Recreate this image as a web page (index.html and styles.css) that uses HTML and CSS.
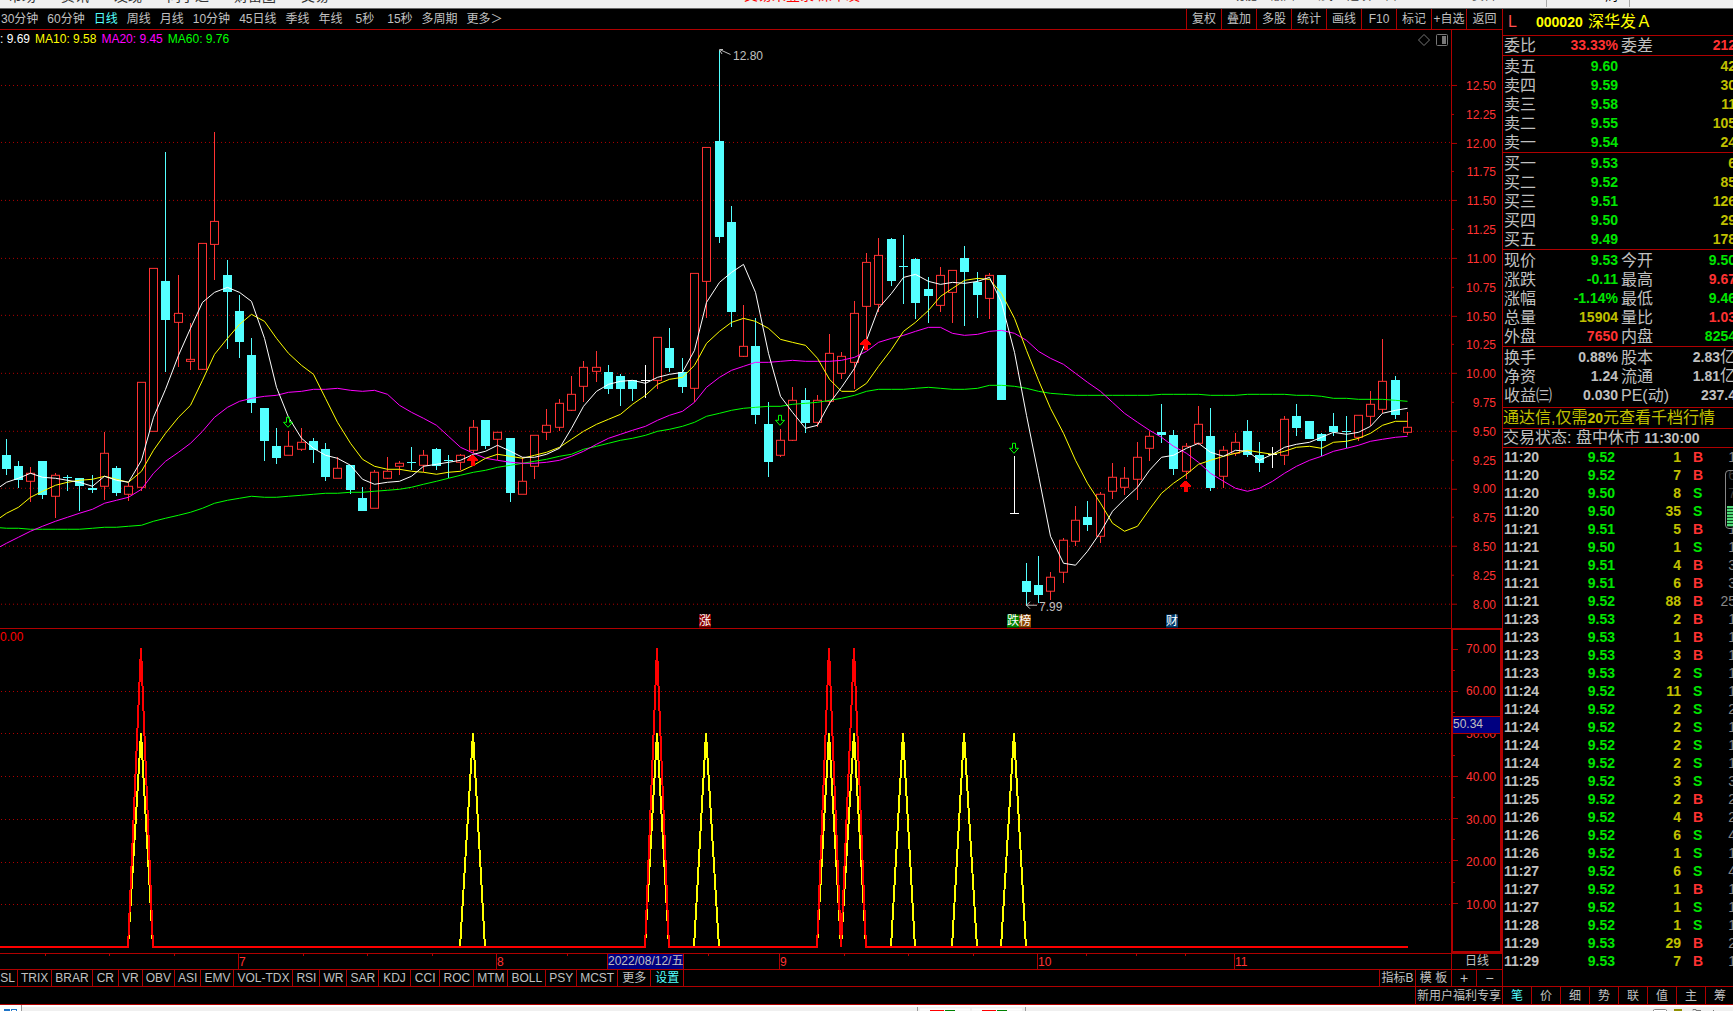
FILE: index.html
```html
<!DOCTYPE html>
<html lang="zh-CN">
<head>
<meta charset="utf-8">
<title>深华发Ａ 000020 日线</title>
<link rel="stylesheet" href="styles.css">
</head>
<body>
<div class="app">
  <header class="menubar">
    <nav class="menubar-inner" aria-label="主菜单">
      <a href="#">市场</a><a href="#">资讯</a><a href="#">发现</a><a href="#">问小达</a><a href="#">财富圈</a><a href="#">交易</a>
      <span class="login">交易未登录 深华发Ａ</span>
      <span class="menu-right">
        <a href="#">功能</a><a href="#">版面</a><a href="#">公式</a><a href="#">选项</a><a href="#">口</a>
      </span>
      <span class="account">资告</span>
      <span class="clock">12:07:05 周</span>
      <span class="window-keys"><span>▾</span><span>■</span><span>×</span></span>
    </nav>
  </header>

  <div class="workspace">
    <main class="charts">
      <div class="toolbar">
        <div class="periods">
          <button>30分钟</button><button>60分钟</button><button class="on">日线</button><button>周线</button><button>月线</button><button>10分钟</button><button>45日线</button><button>季线</button><button>年线</button><button class="short">5秒</button><button>15秒</button><button>多周期</button><button>更多＞</button>
        </div>
        <div class="tools">
          <button>复权</button><button>叠加</button><button>多股</button><button>统计</button><button>画线</button><button>F10</button><button>标记</button><button>+自选</button><button class="last">返回</button>
        </div>
      </div>

      <section class="pane price-pane">
        <div class="plot">
          <svg id="price-plot" class="layer" viewBox="0 30 1451 598" preserveAspectRatio="none"></svg>
          <div id="price-marks" class="marks"></div>
          <div class="legend">
            <span class="ma5">: 9.69</span><span class="ma10">MA10: 9.58</span><span class="ma20">MA20: 9.45</span><span class="ma60">MA60: 9.76</span>
            <svg class="plot-keys" viewBox="0 0 32 14" width="32" height="14">
              <path d="M7 1.500L12.500 7L7 12.500L1.500 7Z" fill="none" stroke="#777"/>
              <rect x="19.500" y="1.500" width="11" height="11" rx="1" fill="none" stroke="#777"/>
              <rect x="25" y="3" width="4" height="8" fill="#777"/>
            </svg>
          </div>
        </div>
        <div class="axis">
          <svg id="price-ticks" class="layer" viewBox="0 30 50 598" preserveAspectRatio="none"></svg>
          <div class="axis-labels"><span>12.50</span><span>12.25</span><span>12.00</span><span>11.75</span><span>11.50</span><span>11.25</span><span>11.00</span><span>10.75</span><span>10.50</span><span>10.25</span><span>10.00</span><span>9.75</span><span>9.50</span><span>9.25</span><span>9.00</span><span>8.75</span><span>8.50</span><span>8.25</span><span>8.00</span></div>
        </div>
      </section>

      <section class="pane signal-pane">
        <div class="plot">
          <svg id="signal-plot" class="layer" viewBox="0 629 1451 324" preserveAspectRatio="none"></svg>
          <div class="legend"><span class="signal">0.00</span></div>
        </div>
        <div class="axis boxed">
          <svg id="signal-ticks" class="layer" viewBox="0 629 50 324" preserveAspectRatio="none"></svg>
          <div class="axis-labels"><span>70.00</span><span>60.00</span><span>50.00</span><span>40.00</span><span>30.00</span><span>20.00</span><span>10.00</span></div>
          <output class="cursor-value">50.34</output>
        </div>
      </section>

      <div class="timeline">
        <div id="months" class="months"></div>
        <div class="period-name">日线</div>
      </div>

      <div class="indicators">
        <div class="indicator-tabs">
          <button class="cut">SL</button><button>TRIX</button><button>BRAR</button><button class="roomy">CR</button><button>VR</button><button>OBV</button><button>ASI</button><button>EMV</button><button>VOL-TDX</button><button>RSI</button><button>WR</button><button>SAR</button><button class="roomy">KDJ</button><button class="roomy">CCI</button><button>ROC</button><button>MTM</button><button>BOLL</button><button>PSY</button><button>MCST</button><button class="roomy">更多</button><button class="on roomy">设置</button>
        </div>
        <div class="indicator-tools">
          <button class="wide">指标B</button><button class="wide">模 板</button><button class="plus">+</button><button class="minus">−</button>
        </div>
      </div>
      <div class="promo"><a href="#">新用户福利专享</a></div>
    </main>

    <aside class="quote">
      <h1 class="stock"><span class="flag">L</span><span class="code">000020</span><span class="name">深华发Ａ</span></h1>
      <table class="rows slim"><tr><th>委比</th><td class="up">33.33%</td><th class="second">委差</th><td class="up">212</td></tr></table>
      <table class="rows book">
        <tr><th>卖五</th><td class="down">9.60</td><td class="vol">42</td></tr>
        <tr><th>卖四</th><td class="down">9.59</td><td class="vol">30</td></tr>
        <tr><th>卖三</th><td class="down">9.58</td><td class="vol">11</td></tr>
        <tr><th>卖二</th><td class="down">9.55</td><td class="vol">105</td></tr>
        <tr><th>卖一</th><td class="down">9.54</td><td class="vol">24</td></tr>
      </table>
      <table class="rows book">
        <tr><th>买一</th><td class="down">9.53</td><td class="vol">6</td></tr>
        <tr><th>买二</th><td class="down">9.52</td><td class="vol">85</td></tr>
        <tr><th>买三</th><td class="down">9.51</td><td class="vol">126</td></tr>
        <tr><th>买四</th><td class="down">9.50</td><td class="vol">29</td></tr>
        <tr><th>买五</th><td class="down">9.49</td><td class="vol">178</td></tr>
      </table>
      <table class="rows">
        <tr><th>现价</th><td class="down">9.53</td><th class="second">今开</th><td class="down">9.50</td></tr>
        <tr><th>涨跌</th><td class="down">-0.11</td><th class="second">最高</th><td class="up">9.67</td></tr>
        <tr><th>涨幅</th><td class="down">-1.14%</td><th class="second">最低</th><td class="down">9.46</td></tr>
        <tr><th>总量</th><td class="vol">15904</td><th class="second">量比</th><td class="up">1.03</td></tr>
        <tr><th>外盘</th><td class="up">7650</td><th class="second">内盘</th><td class="down">8254</td></tr>
      </table>
      <table class="rows basics">
        <tr><th>换手</th><td>0.88%</td><th class="second">股本</th><td>2.83<span class="unit">亿</span></td></tr>
        <tr><th>净资</th><td>1.24</td><th class="second">流通</th><td>1.81<span class="unit">亿</span></td></tr>
        <tr><th>收益㈢</th><td>0.030</td><th class="second">PE(动)</th><td>237.4</td></tr>
      </table>
      <a class="notice" href="#">通达信,仅需<b>20</b>元查看千档行情</a>
      <p class="status">交易状态: 盘中休市 <b>11:30:00</b></p>
      <div class="ticks">
        <table class="rows"><tbody id="tick-rows"></tbody></table>
        <div class="level" aria-hidden="true"><span></span></div>
      </div>
      <div class="quote-tabs">
        <button class="on">笔</button><button>价</button><button>细</button><button>势</button><button>联</button><button>值</button><button>主</button><button>筹</button>
      </div>
    </aside>
  </div>

  <footer class="statusbar">
    <svg class="start" viewBox="0 0 22 6" width="22" height="6"><rect width="22" height="6" fill="#fff"/><path d="M4 4h6v2h-6zM11 4h6v2h-1v-1h-4v1h-1z" fill="#1e74c8"/><path d="M21.500 0v6" stroke="#999"/></svg>
    <svg class="meters" viewBox="0 0 110 6" width="110" height="6">
      <path d="M.5 2v4M108.500 2v4" stroke="#999"/>
      <path d="M3 4.500h50M55 4.500h50" stroke="#fff" stroke-width="2"/>
      <path d="M13 5.500h14M65 5.500h14" stroke="#f00"/><path d="M28 5.500h10M80 5.500h10" stroke="#008000"/>
    </svg>
    <svg class="tray" viewBox="0 0 80 6" width="80" height="6"><path d="M.5 6V5l1-.5h11l1 .5v1" fill="#fff" stroke="#888"/><path d="M21 5h8" stroke="#909000" stroke-width="2"/><path d="M40 5.500V4.500h3v1h5" fill="none" stroke="#777"/><path d="M60 5.500h1" stroke="#777"/></svg>
  </footer>
</div>
<script src="chart.js"></script>
</body>
</html>
```
FILE: styles.css
```css
:root {
  --line: #b00000;
  --red: #ff3232;
  --green: #00e600;
  --cyan: #54ffff;
  --yellow: #c0c000;
  --grey: #c0c0c0;
}
* { box-sizing: border-box; }
body {
  margin: 0;
  background: #000;
  color: var(--grey);
  font: 12px/14px "Liberation Sans", "Noto Sans CJK SC", sans-serif;
}
button {
  margin: 0;
  padding: 0;
  border: 0;
  background: none;
  color: inherit;
  font: inherit;
  white-space: nowrap;
}
a { color: inherit; text-decoration: none; }

.app { display: flex; flex-direction: column; min-height: 100vh; overflow: hidden; }

/* menu bar */
.menubar {
  flex: none;
  height: 9px;
  overflow: hidden;
  background: #f0f0f0;
  border-bottom: 1px solid #696969;
}
.menubar-inner {
  display: flex;
  gap: 25px;
  height: 18px;
  margin-top: -11px;
  padding-left: 8px;
  color: #333;
  font-size: 14px;
  line-height: 14px;
}
.login { flex: 1; padding-left: 56px; text-align: center; color: #f00; line-height: 12px; }
.menu-right { display: flex; gap: 14px; font-size: 12px; }
.account { width: 124px; text-align: center; font-size: 12px; color: #555; }
.clock {
  width: 84px;
  margin-left: -25px;
  padding-left: 4px;
  border: solid #aaa;
  border-width: 0 1px;
  font-size: 13px;
  color: #000;
}
.window-keys { display: flex; gap: 36px; width: 78px; height: 14px; overflow: hidden; font-size: 12px; }

.workspace {
  flex: 1;
  display: grid;
  grid-template-columns: minmax(0, 1fr) 231px;
}
.on { color: var(--cyan); }

/* period and tool buttons */
.charts { display: flex; flex-direction: column; min-width: 0; }
.toolbar {
  flex: none;
  display: flex;
  justify-content: space-between;
  height: 21px;
  border-bottom: 1px solid var(--line);
}
.periods { display: flex; gap: 9px; padding-left: 1px; }
.periods .short { padding: 0 4px; }
.tools { display: flex; }
.tools button { width: 35px; border-left: 1px solid var(--line); }
.tools .last { width: 36px; }

/* chart panes */
.pane { display: flex; min-height: 0; }
.price-pane { flex: 599 1 0; border-bottom: 1px solid var(--line); }
.signal-pane { flex: 325 1 0; border-bottom: 1px solid var(--line); }
.plot { position: relative; flex: 1; min-width: 0; }
.axis {
  position: relative;
  flex: none;
  width: 51px;
  border-left: 1px solid var(--line);
  color: var(--red);
}
.layer { position: absolute; inset: 0; width: 100%; height: 100%; shape-rendering: crispEdges; }
.marks { position: absolute; inset: 0; }
.legend { position: relative; display: flex; gap: 5px; padding-top: 2px; }
.signal-pane .legend { padding-top: 1px; }
.ma5 { color: #fff; }
.ma10 { color: #ff0; }
.ma20 { color: #f0f; }
.ma60 { color: #0f0; }
.signal { color: #f00; }
.plot-keys { margin: 1px 2px 0 auto; }
.axis-labels {
  display: flex;
  flex-direction: column;
  justify-content: space-between;
  height: 100%;
  padding: 49px 6px 16px 0;
  text-align: right;
}
.boxed { border: 2px solid var(--line); border-top-width: 1px; }
.boxed .axis-labels { padding: 12px 4px 39px 0; }
.cursor-value {
  position: absolute;
  left: 0;
  right: 0;
  top: 27%;
  height: 18px;
  border: solid var(--line);
  border-width: 1px 0;
  background: #000080;
  color: var(--grey);
}
.mark { position: absolute; white-space: nowrap; transform: translateY(-50%); }
.badge { color: #fff; line-height: 13px; height: 13px; }
.badge-up { background: #8b0000; }
.badge-down { background: #008000; }
.badge-list { background: #8b4500; }
.badge-fin { background: #003c70; }

/* months */
.timeline { flex: none; display: flex; height: 16px; border-bottom: 1px solid var(--line); }
.months { position: relative; flex: 1; color: var(--red); }
.month, .minor, .cursor-date { position: absolute; top: 0; }
.month { height: 15px; border-left: 1px solid var(--line); line-height: 16px; }
.minor { width: 1px; height: 2px; background: var(--line); }
.cursor-date {
  height: 15px;
  border: solid var(--line);
  border-width: 0 1px;
  background: #000080;
  color: var(--grey);
}
.period-name { width: 51px; border-left: 1px solid var(--line); text-align: center; }

/* indicator tabs */
.indicators {
  flex: none;
  display: flex;
  justify-content: space-between;
  height: 17px;
  border-bottom: 1px solid var(--line);
}
.indicator-tabs, .indicator-tools { display: flex; }
.indicator-tabs button { padding: 0 3px; border-right: 1px solid var(--line); line-height: 16px; }
.indicator-tabs .cut { width: 18px; padding: 0 2px 0 0; }
.indicator-tabs .roomy { padding: 0 4px; }
.indicator-tools button { border-left: 1px solid var(--line); line-height: 16px; }
.indicator-tools .wide { width: 36px; }
.indicator-tools .plus { width: 25px; font-size: 14px; }
.indicator-tools .minus { width: 26px; font-size: 14px; }
.promo {
  flex: none;
  display: flex;
  justify-content: flex-end;
  height: 18px;
  border-bottom: 1px solid var(--line);
}
.promo a { width: 87px; border-left: 1px solid var(--line); text-align: center; line-height: 18px; white-space: nowrap; }

/* quote panel */
.quote {
  display: flex;
  flex-direction: column;
  overflow: hidden;
  border-left: 1px solid var(--line);
}
.stock {
  display: flex;
  align-items: center;
  height: 27px;
  margin: 0;
  border-bottom: 1px solid var(--line);
  font-size: 16px;
  font-weight: 400;
  color: #ff0;
  white-space: nowrap;
}
.flag { width: 33px; padding-left: 5px; color: #ff5050; }
.code { width: 52px; font-size: 14px; font-weight: 700; }
.rows {
  width: calc(100% + 3px);
  table-layout: fixed;
  border-collapse: separate;
  border-spacing: 0;
  padding-top: 1px;
  border-bottom: 1px solid var(--line);
  font-size: 14px;
  line-height: 19px;
  font-weight: 700;
}
.rows th, .rows td { height: 19px; padding: 0; text-align: right; white-space: nowrap; overflow: visible; }
.rows th {
  width: 52px;
  padding-left: 1px;
  text-align: left;
  font-size: 16px;
  font-weight: 400;
}
.rows td:nth-child(2) { width: 63px; }
.rows .second { width: 56px; padding-left: 3px; }
.unit { font-size: 16px; font-weight: 400; line-height: 16px; }
.slim { padding-top: 0; }
.basics { padding-bottom: 2px; }
.up { color: var(--red); }
.down { color: var(--green); }
.vol { color: var(--yellow); }
.notice, .status { margin: 0; border-bottom: 1px solid var(--line); font-size: 16px; white-space: nowrap; }
.notice { height: 21px; line-height: 19px; color: var(--yellow); }
.notice b, .status b { font-size: 14px; }
.status { height: 19px; line-height: 17px; }
.ticks { position: relative; flex: 1; padding-bottom: 16px; border-bottom: 1px solid var(--line); }
.ticks .rows { padding-top: 0; border-bottom: 0; line-height: 18px; }
.ticks .rows th, .ticks .rows td { height: 18px; }
.ticks .rows th { font-size: 14px; font-weight: 700; }
.ticks .rows td:nth-child(2) { width: 60px; }
.ticks .rows td:nth-child(3) { width: 66px; }
.ticks .rows td:nth-child(4) { width: 25px; padding-left: 12px; text-align: left; }
.ticks .rows td:nth-child(5) { color: #888; font-weight: 400; }
.level {
  position: absolute;
  right: -14px;
  top: 22px;
  width: 22px;
  height: 59px;
  padding: 35px 1px 0;
  border: 1px solid #888;
  border-radius: 4px;
  background: rgba(0, 0, 0, 0.6);
}
.level span {
  display: block;
  height: 21px;
  background: repeating-linear-gradient(#50d878 0 2px, #104820 2px 3px);
}
.quote-tabs { display: flex; flex: none; height: 18px; width: 231px; border-bottom: 1px solid var(--line); }
.quote-tabs button { width: 29px; flex: none; padding-top: 1px; border-left: 1px solid var(--line); line-height: 16px; }
.quote-tabs button:first-child { width: 28px; border-left: 0; }

/* status bar */
.statusbar {
  flex: none;
  display: grid;
  grid-template-columns: 1fr 110px 1fr;
  height: 6px;
  overflow: hidden;
  background: linear-gradient(#fff 2px, #f0f0f0 2px);
}
.meters { margin-left: 105px; }
.tray { justify-self: end; }
```
FILE: chart.js
```js
const FIRST_X = 6, STEP = 12.294;
const xOf = i => Math.floor(FIRST_X + STEP * i);

// kind, high, body top, body bottom, low
const candles = `c439 455 469 475|c461 466 480 488|r467 473 481 502|c461 461 495 499|r473 475 496 518|c475 477 478 491|c478 478 486 511|c475 488 490 493|r432 453 486 500|c466 468 493 496
r483 486 494 501|r382 382 487 491|r268 268 431 431|c152 281 320 372|r275 313 322 367|r323 359 361 370|r243 243 369 370|r132 221 244 280|c260 275 292 349|c295 311 342 358
c338 355 403 413|c408 408 441 461|c428 446 458 464|r431 446 455 455|r428 442 449 451|c438 441 450 463|c443 449 477 481|r457 468 478 478|c465 465 490 494|c487 498 511 511
r470 472 508 508|r457 471 478 479|r461 463 466 475|c447 462 463 470|r450 455 465 472|c448 449 466 470|c455 460 461 478|r454 455 462 470|r420 427 450 453|c420 420 446 449
r432 432 439 460|c438 438 493 502|r457 481 494 494|r435 435 466 479|r409 425 432 440|r399 403 427 431|r376 394 410 411|r361 367 386 402|r351 367 371 382|c365 372 389 394
c374 376 389 406|c380 380 389 401|w365 380 381 398|r337 337 380 389|c328 348 368 372|c358 372 387 393|r273 273 388 402|r147 147 281 318|c50 141 237 243|c206 222 312 327
r305 346 356 357|c318 346 415 424|c402 424 462 477|r429 440 455 457|r387 400 440 441|c388 400 423 433|r395 400 422 427|r334 353 401 405|r352 356 373 379|r301 313 362 389
r253 262 306 340|r238 255 304 312|c238 239 281 286|c235 266 267 304|c258 259 303 319|c277 289 296 323|r267 275 305 312|r270 270 292 323|c246 258 272 326|c272 282 295 318
r273 275 298 319|c275 275 400 400|w456 513 514 514|c563 581 592 606|c556 585 595 603|r572 577 591 600|r538 540 572 583|r506 520 541 546|c501 517 525 531|r492 494 536 543
r463 477 491 499|r467 478 487 495|r442 457 479 500|r431 436 448 461|c404 432 435 443|c430 435 469 475|r443 446 471 479|r406 424 443 445|c408 436 488 491|r446 450 476 488
r433 442 453 456|c420 431 455 457|c442 455 463 472|w447 454 455 468|r416 419 455 465|c404 416 428 436|c421 421 439 439|c433 434 441 456|c413 426 432 436|c416 431 432 448
r415 415 437 441|r391 404 416 426|r339 381 409 413|c376 380 415 419|r412 427 432 435`.split(/[|\n]/).map(s => [s[0], ...s.slice(1).split(' ').map(Number)]);

const ma5 = [482,478,473,477,478,480,482,486,476,480,482,460,417,389,355,328,302,292,287,292,301,338,387,417,438,448,455,458,465,479,484,482,481,476,466,464,462,460,454,451,445,451,457,457,454,448,428,406,391,384,381,380,383,377,374,372,350,302,282,272,264,292,353,396,412,428,425,403,387,368,340,308,293,277,274,281,284,282,283,281,277,302,352,415,475,536,563,565,551,532,511,499,487,470,457,455,448,443,452,456,450,451,460,454,447,444,442,437,432,434,432,426,413,410,408];
const ma10 = [513,507,497,491,485,482,480,479,476,479,482,471,450,433,417,405,380,354,338,324,314,321,338,353,365,374,398,422,443,459,466,469,469,471,472,474,472,471,465,458,454,456,458,455,452,447,439,431,424,419,414,404,395,384,379,377,365,343,331,322,318,321,328,339,342,345,358,379,391,391,383,366,349,331,322,310,296,288,280,278,279,293,318,350,380,408,433,460,483,503,523,531,526,509,493,483,474,464,460,456,453,450,452,454,451,447,446,448,442,441,438,433,425,421,421];
const ma20 = [543,537,531,526,521,517,513,509,503,500,497,489,473,461,452,443,431,417,407,401,398,396,395,392,391,389,389,388,390,391,390,394,405,412,418,425,436,447,453,458,460,462,463,463,462,460,456,451,444,438,434,430,426,420,415,411,402,387,377,370,366,362,362,361,360,361,361,361,360,357,351,342,338,335,331,327,327,333,335,334,331,330,333,340,351,358,364,373,382,391,402,413,422,430,437,446,453,462,473,481,488,491,488,481,473,466,460,456,451,448,445,441,439,437,436];
const ma60 = [528,528,529,529,529,529,529,528,527,527,526,525,521,518,515,512,508,503,500,498,496,497,497,496,495,494,493,493,492,492,491,490,489,487,484,481,478,475,472,470,467,465,463,461,459,456,454,449,446,443,440,438,435,431,429,426,422,416,413,410,408,407,406,406,404,403,402,400,398,395,391,389,389,389,388,387,388,389,389,388,385,385,386,388,391,393,394,395,395,395,395,395,395,395,394,394,394,394,395,395,395,394,394,394,394,395,395,396,398,398,399,399,399,400,401];

const colours = { r: '#ff3232', c: '#54ffff', w: '#ffffff' };
const grid = ys => ys.map(y => `<path d="M1 ${y}.500H1451" stroke="#b00000" stroke-dasharray="1 3"/>`).join('');

function candle([kind, high, top, bottom, low], i) {
  const x = xOf(i), c = colours[kind];
  const wick = (a, b) => b > a ? `<rect x="${x}" y="${a}" width="1" height="${b - a}" fill="${c}"/>` : '';
  const body = kind === 'r'
    ? `<rect x="${x - 4}.500" y="${top}.500" width="8" height="${Math.max(bottom - top, 1)}" fill="#000" stroke="${c}"/>`
    : `<rect x="${x - 4}" y="${top}" width="9" height="${bottom - top}" fill="${c}"/>`;
  return wick(high, top) + wick(bottom, low) + body;
}
function average(ys, startY, colour) {
  const pts = ys.map((y, i) => `${xOf(i)}.500,${y}.500`).join(' ');
  return `<polyline points="0,${startY} ${pts}" fill="none" stroke="${colour}"/>`;
}
const downArrow = (x, y) => `<path d="M${x - 1}.500 ${y}.500h3v5h3l-4.500 5l-4.500-5h3z" fill="none" stroke="#0f0"/>`;
const upArrow = (x, y) => `<path d="M${x} ${y}h1l5 5v1h-3v5h-4v-5h-4v-1z" fill="#f00"/>`;

document.getElementById('price-plot').innerHTML =
  grid([85, 142, 200, 258, 315, 373, 431, 488, 546, 604]) +
  candles.map(candle).join('') +
  average(ma60, 528, '#0f0') + average(ma20, 547, '#f0f') + average(ma10, 518, '#ff0') + average(ma5, 487, '#fff') +
  downArrow(287, 417) + downArrow(779, 415) + downArrow(1013, 443) +
  upArrow(472, 455) + upArrow(865, 339) + upArrow(1185, 481) +
  '<path d="M723 49.500H719.500L730.500 54.500M719.500 50L722 54" fill="none" stroke="#c0c0c0"/>' +
  '<path d="M1037 605.500H1026.500L1030 602M1026.500 605.500L1030 609" fill="none" stroke="#c0c0c0"/>';

const marks = [
  ['12.80', 733, 56, ''], ['7.99', 1039, 607, ''],
  ['涨', 699, 621, 'badge badge-up'], ['跌', 1007, 621, 'badge badge-down'],
  ['榜', 1019, 621, 'badge badge-list'], ['财', 1166, 621, 'badge badge-fin']
];
document.getElementById('price-marks').innerHTML = marks.map(([text, x, y, cls]) =>
  `<span class="mark ${cls}" style="left:${x / 14.51}%;top:${(y - 30) / 5.98}%">${text}</span>`).join('');

function peaks(list, top, colour) {
  let d = 'M0 947';
  list.forEach(i => { d += `H${xOf(i - 1)}L${xOf(i)} ${top}L${xOf(i + 1)} 947`; });
  return `<path d="${d}H1408" fill="none" stroke="${colour}" stroke-width="2" stroke-linejoin="bevel"/>`;
}
document.getElementById('signal-plot').innerHTML =
  grid([691, 733, 776, 819, 862, 904]) +
  peaks([11, 38, 53, 57, 67, 69, 73, 78, 82], 733, '#ff0') +
  peaks([11, 53, 67, 69], 648, '#f00');

function ticks(id, first, step, count) {
  let d = '';
  for (let i = 0; i < count; i++) d += `M0 ${Math.round(first + i * step)}.500h${i % 2 ? 2 : 5}`;
  document.getElementById(id).innerHTML = `<path d="${d}" stroke="#b00000"/>`;
}
ticks('price-ticks', 85, 28.83, 19);
ticks('signal-ticks', 648, 21.33, 13);

const left = x => `style="left:${x / 14.51}%"`;
document.getElementById('months').innerHTML =
  [45, 109, 174, 303, 367, 432, 567, 708, 844, 908, 973, 1086, 1136, 1185].map(x => `<i class="minor" ${left(x)}></i>`).join('') +
  [['7', 238], ['8', 496], ['9', 779], ['10', 1037], ['11', 1234]].map(([m, x]) => `<span class="month" ${left(x)}>${m}</span>`).join('') +
  `<span class="cursor-date" ${left(607)}>2022/08/12/五</span>`;

// time, price, volume, side, trade count
const trades = `11:20 9.52 1 B 1,11:20 9.52 7 B 6,11:20 9.50 8 S 7,11:20 9.50 35 S 9,11:21 9.51 5 B 1,11:21 9.50 1 S 1,11:21 9.51 4 B 3,11:21 9.51 6 B 3,11:21 9.52 88 B 25,11:23 9.53 2 B 1,11:23 9.53 1 B 1,11:23 9.53 3 B 1,11:23 9.53 2 S 1,11:24 9.52 11 S 1,11:24 9.52 2 S 2,11:24 9.52 2 S 1,11:24 9.52 2 S 1,11:24 9.52 2 S 1,11:25 9.52 3 S 3,11:25 9.52 2 B 2,11:26 9.52 4 B 2,11:26 9.52 6 S 4,11:26 9.52 1 S 1,11:27 9.52 6 S 4,11:27 9.52 1 B 1,11:27 9.52 1 S 1,11:28 9.52 1 S 1,11:29 9.53 29 B 2,11:29 9.53 7 B 1`;
document.getElementById('tick-rows').innerHTML = trades.split(',').map(line => {
  const [time, price, vol, side, n] = line.split(' ');
  return `<tr><th>${time}</th><td class="down">${price}</td><td class="vol">${vol}</td><td class="${side === 'B' ? 'up' : 'down'}">${side}</td><td>${n}</td></tr>`;
}).join('');
```
